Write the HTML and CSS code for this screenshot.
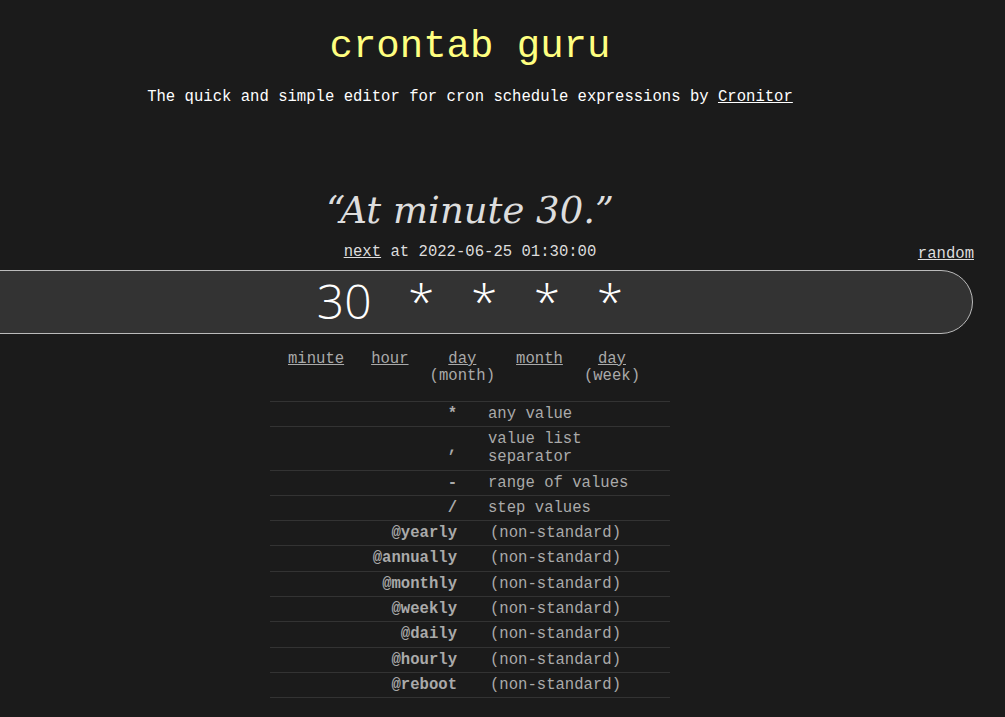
FILE: index.html
```html
<!DOCTYPE html>
<html>
<head>
<meta charset="utf-8">
<link rel="stylesheet" href="styles.css">
</head>
<body>
<div class="page">
  <header class="header">
    <h1 class="title">crontab guru</h1>
    <p class="tagline">The quick and simple editor for cron schedule expressions by <a href="#">Cronitor</a></p>
  </header>
  <main class="editor">
    <div class="human">“At minute 30.”</div>
    <div class="next-row">
      <div class="next"><a href="#">next</a> at 2022-06-25 01:30:00</div>
      <a class="random" href="#">random</a>
    </div>
    <div class="input">30 * * * *</div>
    <div class="parts">
      <div class="part minute"><a href="#">minute</a></div>
      <div class="part"><a href="#">hour</a></div>
      <div class="part"><a href="#">day</a><br>(month)</div>
      <div class="part"><a href="#">month</a></div>
      <div class="part"><a href="#">day</a><br>(week)</div>
    </div>
    <table class="legend">
      <tr><th>*</th><td>any value</td></tr>
      <tr><th>,</th><td>value list<br>separator</td></tr>
      <tr><th>-</th><td>range of values</td></tr>
      <tr><th>/</th><td>step values</td></tr>
      <tr class="ns"><th>@yearly</th><td>(non-standard)</td></tr>
      <tr class="ns"><th>@annually</th><td>(non-standard)</td></tr>
      <tr class="ns"><th>@monthly</th><td>(non-standard)</td></tr>
      <tr class="ns"><th>@weekly</th><td>(non-standard)</td></tr>
      <tr class="ns"><th>@daily</th><td>(non-standard)</td></tr>
      <tr class="ns"><th>@hourly</th><td>(non-standard)</td></tr>
      <tr class="ns"><th>@reboot</th><td>(non-standard)</td></tr>
    </table>
  </main>
</div>
</body>
</html>
```
FILE: styles.css
```css
html, body {
  margin: 0;
  padding: 0;
  background: #1b1b1b;
  height: 100%;
  overflow: hidden;
}
body {
  font-family: "Liberation Mono", "Courier New", monospace;
  color: #ddd;
}
.page {
  width: 1006px;
  margin-left: -33px;
}
.header {
  text-align: center;
  padding-top: 24px;
}
.title {
  margin: 0;
  font-weight: normal;
  font-size: 39px;
  line-height: 46px;
  color: #ffff80;
}
.tagline {
  margin: 17px 0 0 0;
  font-size: 15.6px;
  line-height: 20px;
  color: #fff;
}
.tagline a { color: #fff; }
.editor {
  margin-top: 81px;
}
.human {
  text-align: center;
  font-family: "DejaVu Serif", Georgia, serif;
  font-style: italic;
  font-size: 37px;
  line-height: 46px;
  color: #ddd;
}
.next-row {
  position: relative;
  text-align: center;
  margin-top: 8px;
  height: 28px;
}
.next {
  font-size: 15.6px;
  line-height: 20px;
  color: #ddd;
}
.next a { color: #ddd; }
.random {
  position: absolute;
  right: -1px;
  top: 2px;
  font-size: 15.6px;
  line-height: 20px;
  color: #ddd;
}
.input {
  box-sizing: border-box;
  height: 64px;
  background: #333;
  border: 1px solid #bbb;
  border-radius: 32px;
  text-align: center;
  font-family: "Open Sans", "DejaVu Sans", sans-serif;
  font-weight: 300;
  font-size: 48px;
  line-height: 60px;
  color: #fff;
  word-spacing: 24px;
}
.parts {
  display: flex;
  justify-content: center;
  gap: 21px;
  margin-top: 17px;
  padding-right: 12px;
  font-size: 15.6px;
  line-height: 17px;
  color: #aaa;
  text-align: center;
}
.part.minute { margin-right: 6px; }
.part a { color: #aaa; }
.legend {
  margin: 16px auto 0;
  width: 400px;
  border-collapse: collapse;
  font-size: 15.6px;
  line-height: 18px;
  color: #aaa;
}
.legend tr { border-top: 1px solid #333; border-bottom: 1px solid #333; }
.legend th {
  text-align: right;
  width: 187px;
  padding: 3px 14px 3.3px 0;
  font-weight: bold;
}
.legend td {
  text-align: left;
  padding: 3px 0 3.3px 17px;
}
.legend tr.ns td { padding-left: 19px; }
```
